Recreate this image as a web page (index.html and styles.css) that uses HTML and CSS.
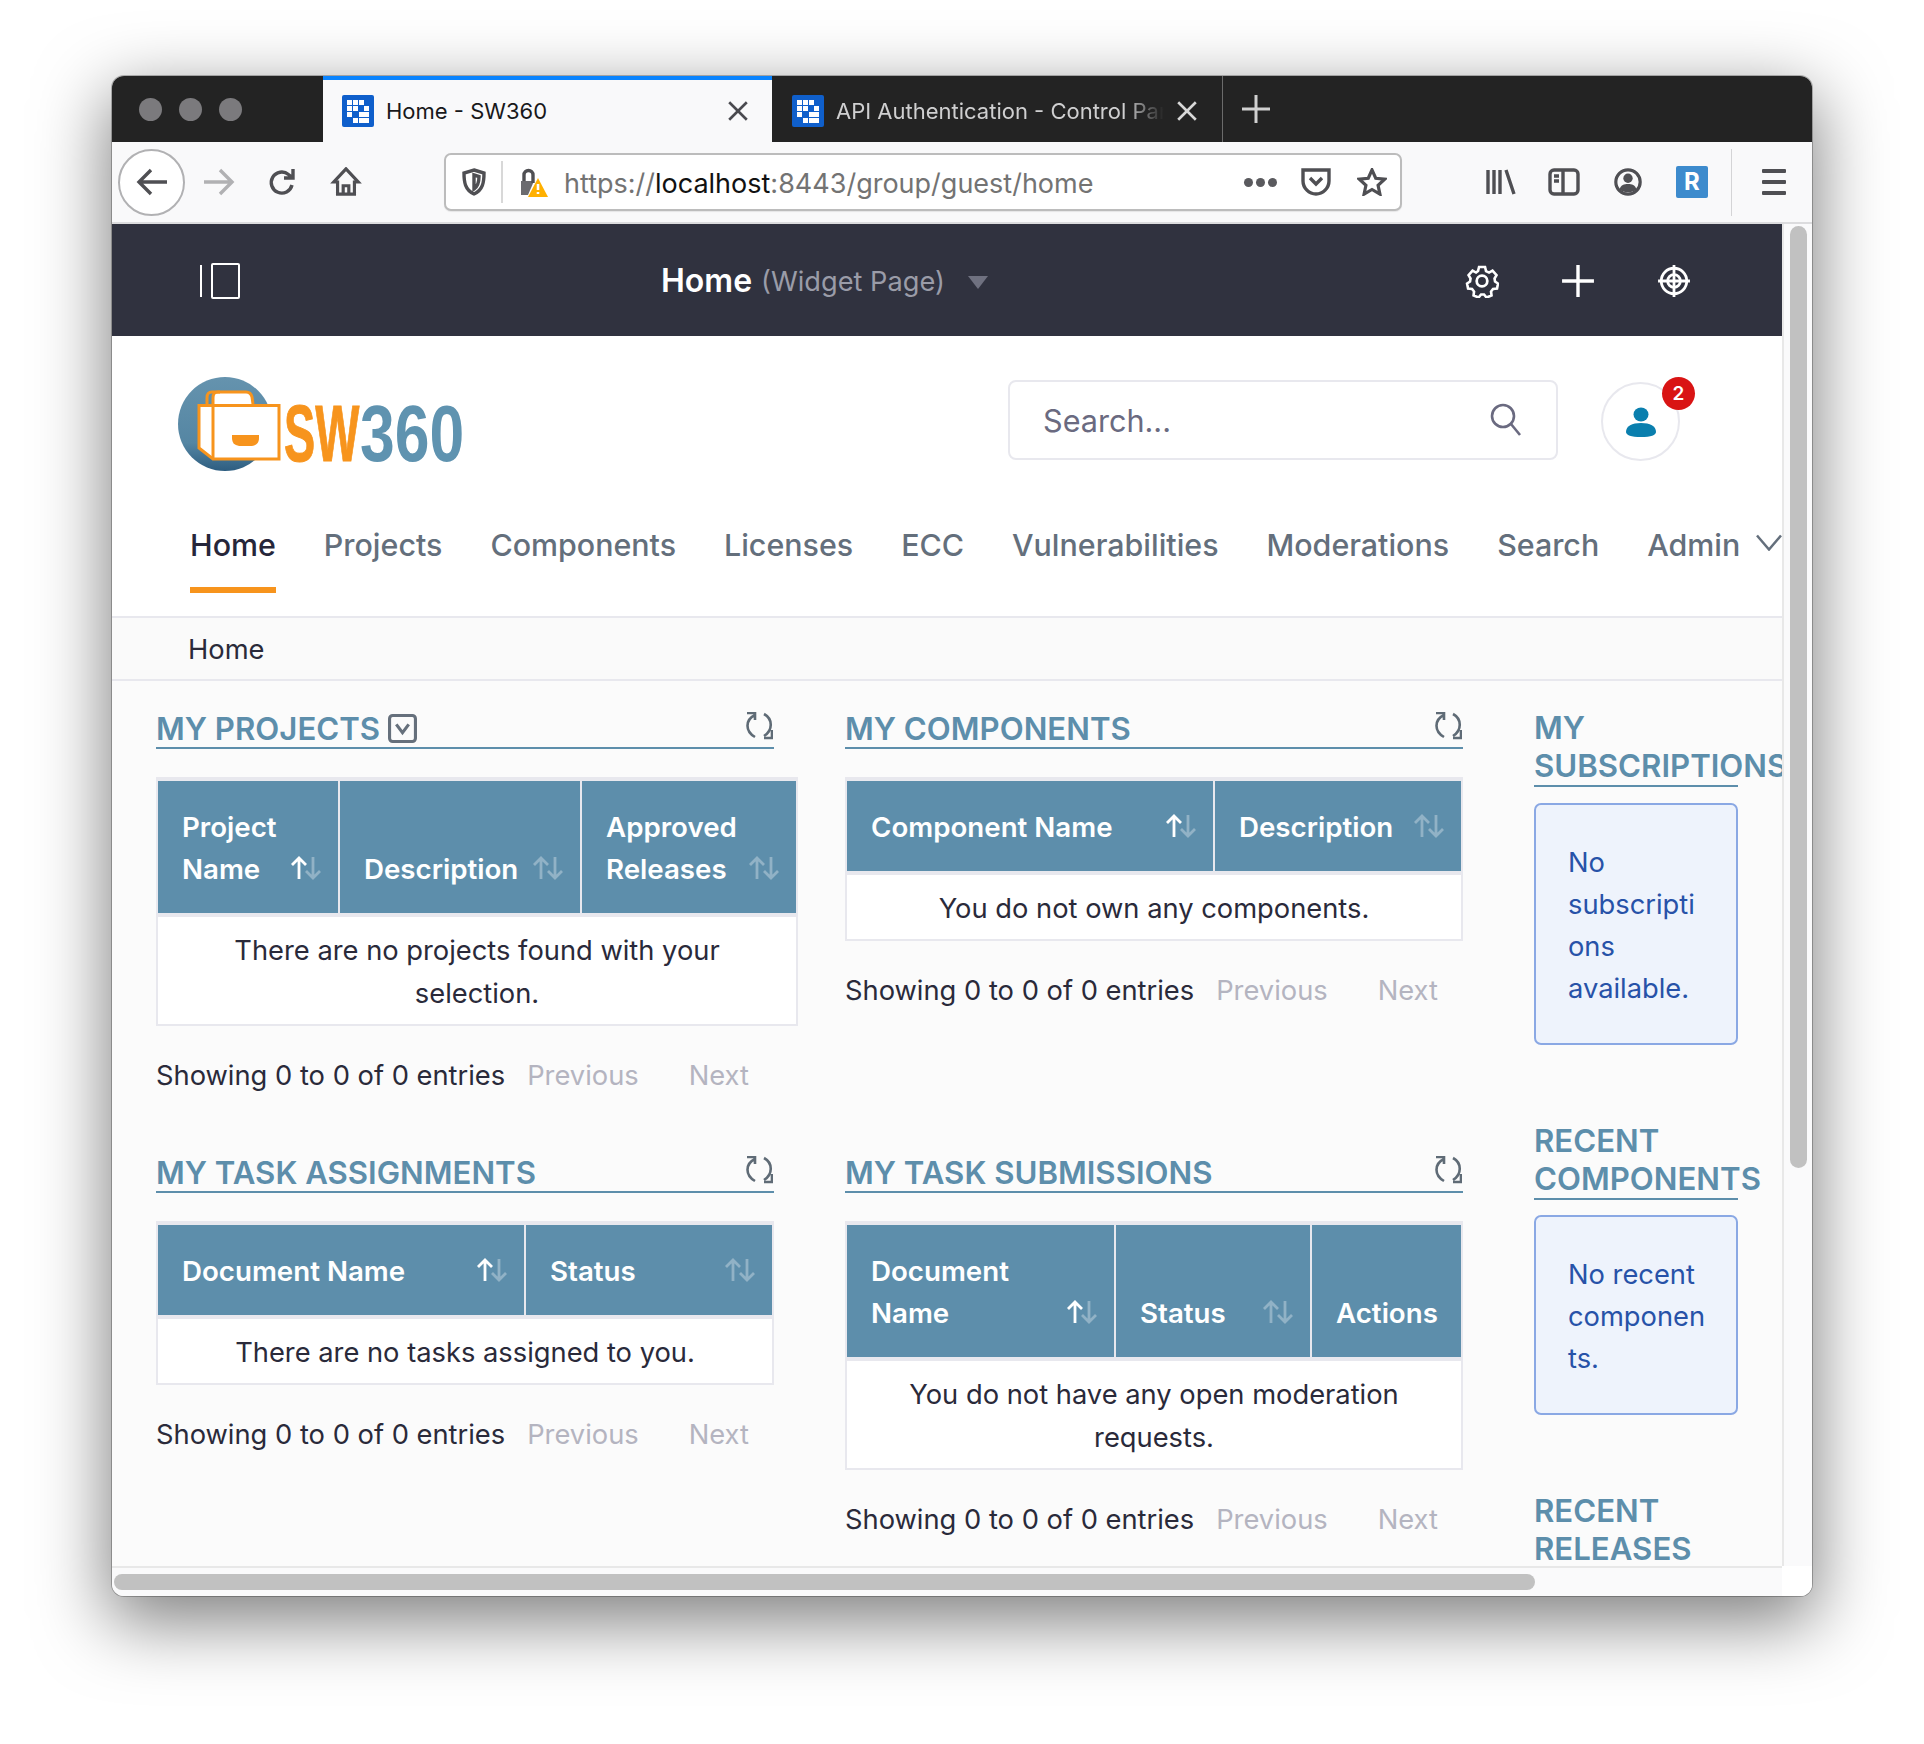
FILE: index.html
```html
<!DOCTYPE html>
<html lang="en">
<head>
    <meta charset="UTF-8">
    <title>Home - SW360</title>
    <link rel="stylesheet" href="styles.css">
</head>
<body>
    <svg class="defs" width="0" height="0">
        <symbol id="favicon" viewBox="0 0 32 32">
            <rect width="32" height="32" rx="2" fill="#0f5fcb"/>
            <g fill="#fff">
                <rect x="5" y="5" width="5" height="5"/><rect x="11" y="5" width="5" height="5"/><rect x="17" y="5" width="5" height="5"/>
                <rect x="5" y="11" width="5" height="5"/><rect x="11" y="11" width="5" height="5"/><rect x="22" y="11" width="5" height="5"/>
                <rect x="5" y="17" width="5" height="5"/><rect x="17" y="17" width="5" height="5"/><rect x="22" y="17" width="5" height="5"/>
                <rect x="11" y="23" width="5" height="5"/><rect x="17" y="23" width="5" height="5"/><rect x="22" y="23" width="5" height="5"/>
            </g>
        </symbol>
        <symbol id="sort" viewBox="0 0 32 24">
            <path class="sort-up" d="M9 23V2M2 9l7-7 7 7"/>
            <path class="sort-down" d="M23 1v21M16 15l7 7 7-7"/>
        </symbol>
        <symbol id="refresh" viewBox="0 0 28 28">
            <path d="M10 3C0 8 0 19 10 25M2 1h8v7"/>
            <path d="M19 2c9 5 9 16 0 22M27 18v8h-8"/>
        </symbol>
    </svg>

    <div class="window">
        <div class="tabbar">
            <div class="traffic">
                <span class="dot"></span><span class="dot"></span><span class="dot"></span>
            </div>
            <div class="tab tab-active">
                <svg class="favicon"><use href="#favicon"/></svg>
                <span class="tab-title">Home - SW360</span>
                <svg class="tab-close" viewBox="0 0 20 20"><path d="M2 2l16 16M18 2L2 18"/></svg>
            </div>
            <div class="tab">
                <svg class="favicon"><use href="#favicon"/></svg>
                <span class="tab-title">API Authentication - Control Panel</span>
                <svg class="tab-close" viewBox="0 0 20 20"><path d="M2 2l16 16M18 2L2 18"/></svg>
            </div>
            <svg class="new-tab" viewBox="0 0 28 28"><path d="M14 0v28M0 14h28"/></svg>
        </div>

        <div class="toolbar">
            <button class="back"><svg viewBox="0 0 32 28" width="32" height="28"><path d="M31 14H3M15 2L3 14l12 12"/></svg></button>
            <svg class="tool-icon forward" viewBox="0 0 32 28"><path d="M1 14h28M17 2l12 12-12 12"/></svg>
            <svg class="tool-icon reload" viewBox="0 0 32 28"><path d="M25 17a10.500 10.500 0 1 1-3.500-10.500L26 10M26 1v9h-9"/></svg>
            <svg class="tool-icon home" viewBox="0 0 32 32"><path d="M16 2L3 16h4v13h18V16h4zM13 29v-9h6v9"/></svg>
            <div class="urlbar">
                <svg class="url-shield" viewBox="0 0 24 28"><path d="M12 2l10 3c0 9-1 17-10 21C3 22 2 14 2 5zM12 7l5 1.500c0 5-1 10-5 12.500z"/></svg>
                <span class="url-sep"></span>
                <svg class="url-lock" viewBox="0 0 30 30">
                    <path class="lock-body" d="M2 14h13l-6 14H2z"/>
                    <path class="lock-arc" d="M5 14V8a4.500 4.500 0 0 1 9 0v8"/>
                    <path class="lock-warn" d="M19 11l10 19H9z"/>
                    <path class="lock-mark" d="M19 17v6M19 25v2"/>
                </svg>
                <span class="url-text">https://<b>localhost</b>:8443/group/guest/home</span>
                <span class="url-dots"><i></i><i></i><i></i></span>
                <svg class="url-icon" viewBox="0 0 30 28"><path d="M2 2h26v11c0 7-6 13-13 13S2 20 2 13zM9 10l6 6 6-6"/></svg>
                <svg class="url-icon" viewBox="0 0 30 30"><path d="M15 2l4 9 9.500 1-7 6.500 2 9.500L15 23l-8.500 5 2-9.500-7-6.500L11 11z"/></svg>
            </div>
            <svg class="tool-icon library" viewBox="0 0 32 28"><path d="M4 2v24M10 2v24M16 2v24M22 2l8 24"/></svg>
            <svg class="tool-icon" viewBox="0 0 32 28"><rect x="2" y="2" width="28" height="24" rx="4"/><path d="M15 2v24M6 8h5M6 13h5"/></svg>
            <svg class="tool-icon" viewBox="0 0 32 32"><circle cx="16" cy="16" r="13"/><circle class="solid" cx="16" cy="12" r="5"/><path class="solid" d="M7 24c1-5 5-6 9-6s8 1 9 6c-5 4-13 4-18 0z"/></svg>
            <span class="ext-r">R</span>
            <span class="tool-sep"></span>
            <span class="burger"><i></i><i></i><i></i></span>
        </div>

        <div class="viewport">
            <div class="page">
                <header class="topbar">
                    <div class="sidebar-toggle"><i></i><b></b></div>
                    <div class="page-title">
                        <strong>Home</strong> <span>(Widget Page)</span>
                        <i class="title-caret"></i>
                    </div>
                    <div class="topbar-icons">
                        <svg viewBox="0 0 32 32" class="top-icon"><path d="M13 2h6l1 4 3 1.500 3.500-2 4 4.500-2 3.500.5 3 3 2-1 5-4 .5-2 2.500.5 4-5 2-2.500-3h-3l-2.500 3-5-2 .5-4-2-2.500-4-.5-1-5 3-2 .5-3-2-3.500 4-4.500 3.500 2L12 6z" transform="translate(1 1) scale(.94)"/><circle cx="16" cy="16" r="5"/></svg>
                        <svg viewBox="0 0 32 32" class="top-icon plus"><path d="M16 1v30M1 16h30"/></svg>
                        <svg viewBox="0 0 32 32" class="top-icon"><circle cx="16" cy="16" r="12"/><circle cx="16" cy="16" r="6"/><path d="M16 1v30M1 16h30"/></svg>
                    </div>
                </header>

                <div class="masthead">
                    <svg class="logo" viewBox="0 0 283 94">
                        <defs>
                            <linearGradient id="logo-fill" x1="0" y1="0" x2="0" y2="1">
                                <stop offset="0" stop-color="#6593ae"/>
                                <stop offset=".7" stop-color="#5586a3"/>
                                <stop offset="1" stop-color="#2d5d80"/>
                            </linearGradient>
                        </defs>
                        <circle cx="47" cy="47" r="47" fill="url(#logo-fill)"/>
                        <path d="M35 27v-6c0-5 2-6 5-6h28c3 0 5 1 6 5l1 7" fill="#fff" stroke="#f7941d" stroke-width="3"/>
                        <path d="M29 27v-6c0-5 2-6 5-6h8" fill="none" stroke="#f7941d" stroke-width="3"/>
                        <path d="M21 28.500h80V82H35L21 71z" fill="#fff" stroke="#f7941d" stroke-width="3"/>
                        <path d="M35 28.500V82" stroke="#f7941d" stroke-width="3"/>
                        <path d="M54 58h27v3c0 6-4 8-9 8h-9c-5 0-9-2-9-8z" fill="#f7941d"/>
                        <text class="logo-sw" transform="translate(106 83.500) scale(.585 1)">SW</text>
                        <text class="logo-num" transform="translate(182 83.500) scale(.78 1)">360</text>
                    </svg>
                    <div class="search-box">
                        <span>Search...</span>
                        <svg viewBox="0 0 32 34" width="32" height="34"><circle cx="13" cy="13" r="11"/><path d="M21 21l9 11"/></svg>
                    </div>
                    <div class="avatar">
                        <svg viewBox="0 0 30 30" width="30" height="30"><ellipse cx="15" cy="7.500" rx="7.500" ry="7"/><path d="M0 25c0-6 6-9 15-9s15 3 15 9c0 3-5 5-15 5S0 28 0 25z"/></svg>
                        <span class="badge">2</span>
                    </div>
                </div>

                <nav class="mainnav">
                    <a class="active">Home</a>
                    <a>Projects</a>
                    <a>Components</a>
                    <a>Licenses</a>
                    <a>ECC</a>
                    <a>Vulnerabilities</a>
                    <a>Moderations</a>
                    <a>Search</a>
                    <a>Admin <svg class="chevron" viewBox="0 0 26 16"><path d="M1 1l12 14L25 1"/></svg></a>
                </nav>

                <div class="breadcrumb">Home</div>

                <main class="portal">
                    <section class="widget widget-projects">
                        <h3 class="widget-title">
                            <span>MY PROJECTS</span>
                            <svg class="filter-icon" viewBox="0 0 28 28"><rect x="1.500" y="1.500" width="25" height="25" rx="3"/><path d="M8 10l6 8 6-8"/></svg>
                            <svg class="refresh"><use href="#refresh"/></svg>
                        </h3>
                        <div class="table-wrap wide">
                            <table>
                                <colgroup><col class="c181"><col class="c242"><col></colgroup>
                                <thead><tr>
                                    <th class="sorted">Project<br>Name<svg class="sort"><use href="#sort"/></svg></th>
                                    <th>Description<svg class="sort"><use href="#sort"/></svg></th>
                                    <th>Approved<br>Releases<svg class="sort"><use href="#sort"/></svg></th>
                                </tr></thead>
                                <tbody><tr><td colspan="3">There are no projects found with your selection.</td></tr></tbody>
                            </table>
                        </div>
                        <div class="pager"><span>Showing 0 to 0 of 0 entries</span><a>Previous</a><a>Next</a></div>
                    </section>

                    <section class="widget">
                        <h3 class="widget-title">
                            <span>MY COMPONENTS</span>
                            <svg class="refresh"><use href="#refresh"/></svg>
                        </h3>
                        <div class="table-wrap">
                            <table>
                                <colgroup><col class="c368"><col></colgroup>
                                <thead><tr>
                                    <th class="sorted">Component Name<svg class="sort"><use href="#sort"/></svg></th>
                                    <th>Description<svg class="sort"><use href="#sort"/></svg></th>
                                </tr></thead>
                                <tbody><tr><td colspan="2">You do not own any components.</td></tr></tbody>
                            </table>
                        </div>
                        <div class="pager"><span>Showing 0 to 0 of 0 entries</span><a>Previous</a><a>Next</a></div>
                    </section>

                    <aside class="side">
                        <h3 class="widget-title side-title">MY SUBSCRIPTIONS</h3>
                        <div class="alert">No subscriptions available.</div>
                        <h3 class="widget-title side-title">RECENT COMPONENTS</h3>
                        <div class="alert alert-second">No recent components.</div>
                        <h3 class="widget-title side-title">RECENT RELEASES</h3>
                    </aside>

                    <section class="widget">
                        <h3 class="widget-title">
                            <span>MY TASK ASSIGNMENTS</span>
                            <svg class="refresh"><use href="#refresh"/></svg>
                        </h3>
                        <div class="table-wrap">
                            <table>
                                <colgroup><col class="c368"><col></colgroup>
                                <thead><tr>
                                    <th class="sorted">Document Name<svg class="sort"><use href="#sort"/></svg></th>
                                    <th>Status<svg class="sort"><use href="#sort"/></svg></th>
                                </tr></thead>
                                <tbody><tr><td colspan="2">There are no tasks assigned to you.</td></tr></tbody>
                            </table>
                        </div>
                        <div class="pager"><span>Showing 0 to 0 of 0 entries</span><a>Previous</a><a>Next</a></div>
                    </section>

                    <section class="widget">
                        <h3 class="widget-title">
                            <span>MY TASK SUBMISSIONS</span>
                            <svg class="refresh"><use href="#refresh"/></svg>
                        </h3>
                        <div class="table-wrap">
                            <table>
                                <colgroup><col class="c268"><col class="c196"><col></colgroup>
                                <thead><tr>
                                    <th class="sorted">Document<br>Name<svg class="sort"><use href="#sort"/></svg></th>
                                    <th>Status<svg class="sort"><use href="#sort"/></svg></th>
                                    <th>Actions</th>
                                </tr></thead>
                                <tbody><tr><td colspan="3">You do not have any open moderation requests.</td></tr></tbody>
                            </table>
                        </div>
                        <div class="pager"><span>Showing 0 to 0 of 0 entries</span><a>Previous</a><a>Next</a></div>
                    </section>
                </main>
            </div>
            <div class="vscroll"><i></i></div>
            <div class="hscroll"><i></i></div>
            <div class="corner"></div>
        </div>
    </div>
</body>
</html>
```

FILE: styles.css
```css
* {
    box-sizing: border-box;
}

body {
    margin: 0;
    width: 1924px;
    height: 1744px;
    overflow: hidden;
    background: #fff;
    font-family: Inter, "Noto Sans", sans-serif;
    font-size: 27.3px;
    line-height: 42px;
    color: #2a2a3a;
}

.defs {
    display: block;
    height: 0;
}

.window {
    width: 1700px;
    height: 1520px;
    margin: 76px 0 0 112px;
    border-radius: 12px;
    overflow: hidden;
    box-shadow: 0 22px 70px 4px rgba(0, 0, 0, 0.5), 0 0 0 1px rgba(0, 0, 0, 0.25);
}

/* browser chrome */
.tabbar {
    display: flex;
    align-items: stretch;
    height: 66px;
    background: #232323;
}

.traffic {
    display: flex;
    align-items: center;
    gap: 17px;
    width: 211px;
    padding: 0 0 0 27px;
}

.dot {
    width: 23px;
    height: 23px;
    border-radius: 50%;
    background: #7b7a7d;
}

.tab {
    display: flex;
    align-items: center;
    width: 451px;
    padding: 3px 24px 0 20px;
    font-size: 22px;
    color: #cfcfd0;
    border-right: 1px solid #6b6b6b;
}

.tab-active {
    width: 449px;
    padding-top: 0;
    padding-left: 19px;
    padding-right: 23px;
    background: #f9f9fa;
    color: #18181a;
    border-right: 0;
    border-top: 4px solid #0a84ff;
}

.favicon {
    flex: none;
    width: 32px;
    height: 32px;
    margin-right: 12px;
}

.tab-title {
    flex: 1;
    overflow: hidden;
    white-space: nowrap;
    -webkit-mask-image: linear-gradient(to right, #000 88%, transparent 100%);
    mask-image: linear-gradient(to right, #000 88%, transparent 100%);
}

.tab-active .tab-title {
    -webkit-mask-image: none;
    mask-image: none;
}

.tab-close {
    flex: none;
    width: 22px;
    height: 22px;
    margin-left: 12px;
    fill: none;
    stroke: #d8d8d8;
    stroke-width: 2.4;
}

.tab-active .tab-close {
    stroke: #4a4a4f;
}

.new-tab {
    align-self: center;
    width: 28px;
    height: 28px;
    margin-left: 19px;
    fill: none;
    stroke: #d0d0d0;
    stroke-width: 3;
}

.toolbar {
    display: flex;
    align-items: center;
    height: 82px;
    padding-left: 6px;
    background: #f9f9fa;
    border-bottom: 2px solid #dcdcde;
}

.toolbar svg {
    fill: none;
    stroke: #4f4f53;
    stroke-width: 3.4;
}

.back {
    flex: none;
    display: flex;
    align-items: center;
    justify-content: center;
    width: 67px;
    height: 67px;
    padding: 0;
    background: #fff;
    border: 2px solid #b1b1b3;
    border-radius: 50%;
}

.tool-icon {
    flex: none;
    width: 32px;
    height: 30px;
    margin-left: 32px;
}

.forward {
    margin-left: 18px;
}

.home {
    margin-left: 31px;
}

.toolbar .forward {
    stroke: #b1b1b3;
}

.toolbar svg .solid {
    fill: #4f4f53;
    stroke: none;
}

.urlbar {
    flex: none;
    display: flex;
    align-items: center;
    width: 958px;
    height: 58px;
    margin-left: 82px;
    margin-right: 82px;
    padding: 0 13px 0 16px;
    background: #fff;
    border: 2px solid #bcbcbc;
    border-radius: 7px;
    box-shadow: 0 1px 1px rgba(0, 0, 0, 0.08);
    font-size: 27px;
    color: #737373;
}

.url-shield {
    flex: none;
    width: 24px;
    height: 28px;
}

.url-sep {
    flex: none;
    width: 2px;
    height: 42px;
    margin: 0 16px 0 15px;
    background: #d8d8d8;
}

.url-lock {
    flex: none;
    width: 30px;
    height: 30px;
    margin-right: 15px;
}

.toolbar .lock-body {
    fill: #6b6b6f;
    stroke: none;
}

.toolbar .lock-warn {
    fill: #ffb000;
    stroke: none;
}

.toolbar .lock-mark {
    stroke: #fff;
    stroke-width: 2.6;
}

.url-text {
    flex: 1;
    padding-top: 4px;
    white-space: nowrap;
}

.url-text b {
    font-weight: 400;
    color: #111;
}

.url-dots {
    display: flex;
    gap: 3px;
    margin-right: -2px;
}

.url-dots i {
    width: 9px;
    height: 9px;
    border-radius: 50%;
    background: #5a5a5e;
}

.url-icon {
    flex: none;
    width: 30px;
    height: 28px;
    margin-left: 26px;
}

.library {
    margin-left: 0;
}

.ext-r {
    flex: none;
    width: 32px;
    height: 32px;
    margin-left: 32px;
    border-radius: 2px;
    background: #3d8bcd;
    color: #fff;
    font-size: 24px;
    font-weight: 700;
    line-height: 32px;
    text-align: center;
}

.tool-sep {
    flex: none;
    width: 1px;
    height: 67px;
    margin: 0 30px 0 23px;
    background: #d4d4d6;
}

.burger {
    display: flex;
    flex-direction: column;
    gap: 7px;
}

.burger i {
    display: block;
    width: 24px;
    height: 4px;
    background: #4f4f53;
    border-radius: 1px;
}

.viewport {
    display: grid;
    grid-template-columns: 1670px 30px;
    grid-template-rows: 1342px 30px;
    background: #fafafb;
}

.page {
    overflow: hidden;
    background: #fbfbfb;
}

.vscroll {
    padding: 2px 5px 0 6px;
    border-left: 2px solid #e8e8e8;
}

.vscroll i {
    display: block;
    width: 17px;
    height: 942px;
    border-radius: 9px;
    background: #c1c1c1;
}

.hscroll {
    padding: 6px 0 0 2px;
    border-top: 2px solid #e8e8e8;
}

.hscroll i {
    display: block;
    width: 1421px;
    height: 16px;
    border-radius: 8px;
    background: #c1c1c1;
}

.corner {
    background: #fff;
}

/* portal header */
.topbar {
    display: flex;
    align-items: center;
    height: 112px;
    background: #30323f;
    padding: 2px 88px 0;
    color: #fff;
}

.sidebar-toggle {
    display: flex;
    align-items: center;
    gap: 9px;
    width: 461px;
}

.sidebar-toggle i {
    width: 2px;
    height: 32px;
    background: #fff;
}

.sidebar-toggle b {
    width: 29px;
    height: 36px;
    border: 2px solid #fff;
    border-radius: 2px;
}

.page-title {
    display: flex;
    align-items: center;
    gap: 9px;
    font-size: 27.2px;
    color: #9a9ca8;
}

.page-title span {
    padding-top: 2px;
}

.page-title strong {
    font-size: 32px;
    font-weight: 600;
    color: #fff;
}

.title-caret {
    width: 0;
    height: 0;
    margin: 2px 0 0 14px;
    border-left: 10px solid transparent;
    border-right: 10px solid transparent;
    border-top: 13px solid #6f7180;
}

.topbar-icons {
    display: flex;
    gap: 62px;
    margin-left: auto;
    margin-right: 3px;
}

.top-icon {
    width: 34px;
    height: 34px;
    fill: none;
    stroke: #fff;
    stroke-width: 2.600;
}

.plus {
    stroke-width: 3.2;
}

.masthead {
    display: flex;
    align-items: flex-start;
    height: 170px;
    padding: 41px 0 0 66px;
    background: #fff;
}

.logo {
    flex: none;
    width: 283px;
    height: 94px;
    margin-right: 547px;
    overflow: visible;
}

.logo-sw,
.logo-num {
    font-family: "Liberation Sans", sans-serif;
    font-size: 80px;
    font-weight: 700;
}

.logo-sw {
    fill: #f7941d;
    stroke: #f7941d;
    stroke-width: 1;
}

.logo-num {
    fill: #5f93b0;
}

.search-box {
    display: flex;
    align-items: center;
    justify-content: space-between;
    width: 550px;
    height: 80px;
    margin-top: 3px;
    padding: 2px 34px 0 33px;
    border: 2px solid #e8e8ee;
    border-radius: 8px;
    font-size: 30.6px;
    color: #6a6a80;
}

.search-box svg {
    margin-top: -2px;
    fill: none;
    stroke: #6a6a80;
    stroke-width: 2.600;
}

.avatar {
    position: relative;
    display: flex;
    align-items: center;
    justify-content: center;
    width: 79px;
    height: 79px;
    margin: 5px 0 0 43px;
    border: 2px solid #e8e8ee;
    border-radius: 50%;
}

.avatar svg {
    fill: #0a7fae;
}

.badge {
    position: absolute;
    top: -7px;
    right: -17px;
    width: 33px;
    height: 33px;
    border-radius: 50%;
    background: #d91414;
    color: #fff;
    font-size: 19px;
    font-weight: 600;
    line-height: 33px;
    text-align: center;
}

.mainnav {
    display: flex;
    gap: 48px;
    height: 110px;
    padding: 0 0 0 78px;
    background: #fff;
    font-size: 30.4px;
    font-weight: 500;
    line-height: 48px;
    color: #646f7c;
    white-space: nowrap;
}

.mainnav a {
    display: block;
    flex: none;
    height: 87px;
    padding-top: 15px;
}

.mainnav .active {
    color: #26263a;
    border-bottom: 6px solid #f7941d;
}

.chevron {
    width: 26px;
    height: 17px;
    margin-left: 8px;
    vertical-align: 5px;
    fill: none;
    stroke: #646f7c;
    stroke-width: 2.500;
}

.breadcrumb {
    height: 65px;
    padding: 11px 0 0 76px;
    background: #fafafa;
    border-top: 2px solid #e8e8ee;
    border-bottom: 2px solid #e8e8ee;
}

/* widgets */
.portal {
    display: grid;
    grid-template-columns: 618px 618px 204px;
    grid-template-rows: 444px auto;
    column-gap: 71px;
    padding: 27px 0 0 44px;
}

.widget {
    min-width: 0;
}

.side {
    grid-column: 3;
    grid-row: 1 / 3;
    height: 900px;
}

.widget-title {
    position: relative;
    display: flex;
    align-items: flex-start;
    gap: 8px;
    margin: 0 0 28px;
    padding-top: 3px;
    border-bottom: 2px solid #5d8eab;
    font-size: 31.2px;
    font-weight: 600;
    line-height: 36px;
    color: #5d8eab;
    white-space: nowrap;
}

.side-title {
    display: block;
    margin-bottom: 16px;
    padding-top: 2px;
    line-height: 37.5px;
    white-space: normal;
}

.refresh {
    position: absolute;
    top: 4px;
    right: 1px;
    width: 28px;
    height: 28px;
    fill: none;
    stroke: #5f6b76;
    stroke-width: 2.600;
}

.filter-icon {
    width: 29px;
    height: 29px;
    margin-top: 3px;
    fill: none;
    stroke: #66707c;
    stroke-width: 3;
}

.table-wrap {
    border: 2px solid #e8e8ee;
    background: #fff;
}

.wide {
    width: 642px;
}

table {
    width: 100%;
    table-layout: fixed;
    border-collapse: collapse;
}

.c181 { width: 181px; }
.c242 { width: 242px; }
.c368 { width: 367px; }
.c268 { width: 268px; }
.c196 { width: 196px; }

thead tr {
    border-top: 2px solid #e8e8ee;
    border-bottom: 4px solid #e8e8ee;
}

th {
    position: relative;
    padding: 25px 20px 23px 24px;
    background: #5d8eab;
    border-right: 2px solid #e8e8ee;
    color: #fff;
    font-size: 27.7px;
    font-weight: 600;
    text-align: left;
    vertical-align: bottom;
}

th:last-child {
    border-right: 0;
}

.sort {
    --up: rgba(255, 255, 255, 0.32);
    position: absolute;
    right: 16px;
    bottom: 33px;
    width: 32px;
    height: 24px;
    fill: none;
    stroke: rgba(255, 255, 255, 0.32);
    stroke-width: 2.800;
}

.sorted .sort {
    --up: #fff;
}

.sort-up {
    stroke: var(--up);
}

td {
    padding: 12px 40px 9px;
    line-height: 43px;
    text-align: center;
}

.pager {
    display: flex;
    margin-top: 29px;
    white-space: nowrap;
}

.pager a {
    margin-left: 22px;
    color: #b4b4c0;
}

.pager a + a {
    margin-left: 50px;
}

.alert {
    margin-bottom: 76px;
    padding: 37px 30px 33px 32px;
    background: #eef3fc;
    border: 2px solid #8aa8e4;
    border-radius: 7px;
    color: #2752a8;
    overflow-wrap: anywhere;
}

.alert-second {
    margin-top: -1px;
}
```
